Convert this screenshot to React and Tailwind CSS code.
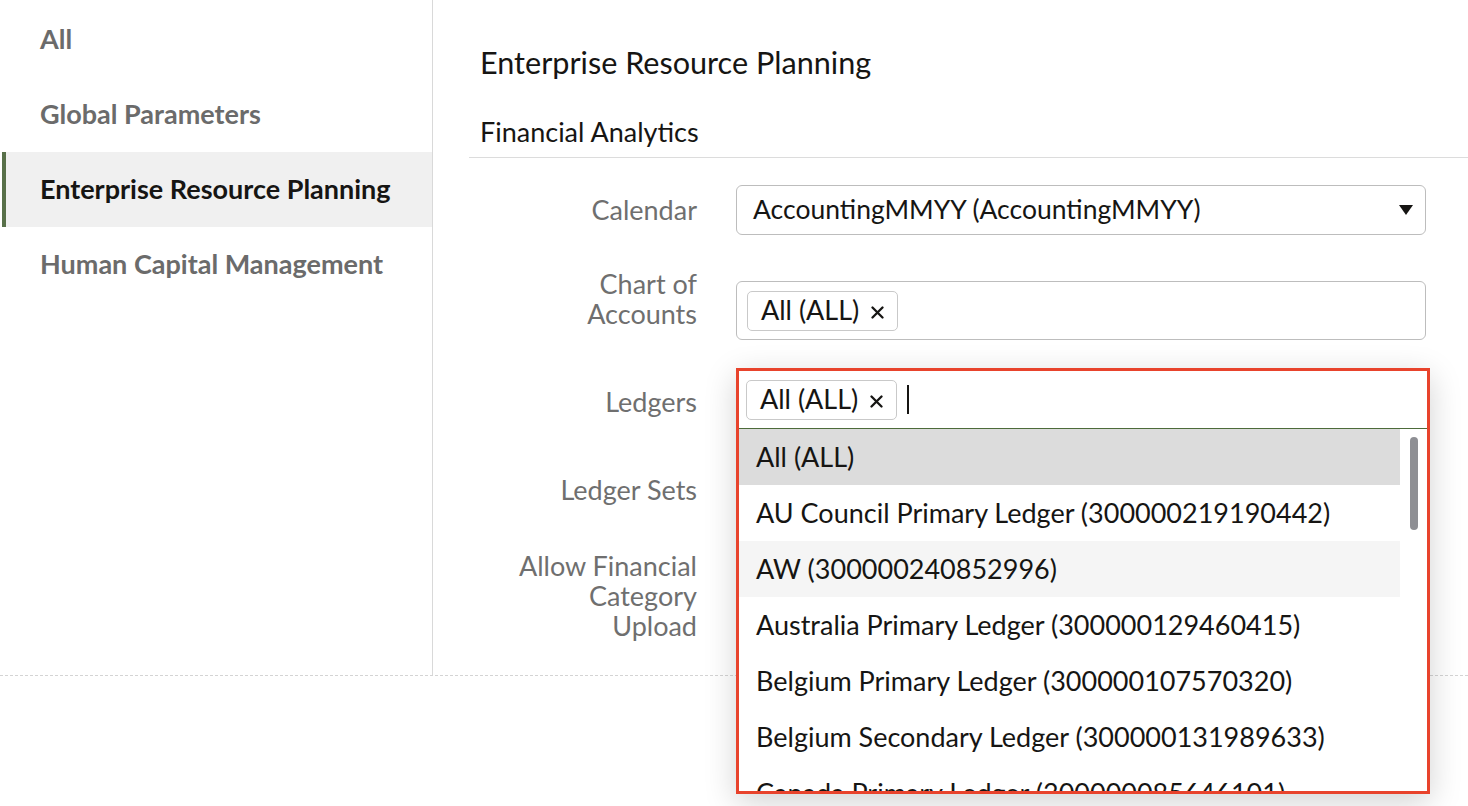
import { ChevronDown } from "lucide-react";

const font = { fontFamily: "Lato, 'Open Sans', sans-serif" };

const navItems = [
  { label: "All" },
  { label: "Global Parameters" },
  { label: "Enterprise Resource Planning", active: true },
  { label: "Human Capital Management" },
];

const ledgerOptions = [
  "All (ALL)",
  "AU Council Primary Ledger (300000219190442)",
  "AW (300000240852996)",
  "Australia Primary Ledger (300000129460415)",
  "Belgium Primary Ledger (300000107570320)",
  "Belgium Secondary Ledger (300000131989633)",
  "Canada Primary Ledger (300000085646101)",
];

function Chip({ label }) {
  return (
    <span className="inline-flex items-center h-[40px] pl-[13px] pr-[13px] gap-[12px] border border-[#c9c9c9] rounded-[5px] bg-white text-[27px] text-[#161513]">
      {label}
      <svg width="13" height="13" viewBox="0 0 13 13" className="mt-[3px]">
        <path d="M1.5 1.5 L11.5 11.5 M11.5 1.5 L1.5 11.5" stroke="#161513" strokeWidth="2.3" strokeLinecap="round" />
      </svg>
    </span>
  );
}

function Label({ children, className = "" }) {
  return (
    <div className={`w-[228px] shrink-0 text-right text-[27px] leading-[30px] text-[#6f6f6f] ${className}`}>
      {children}
    </div>
  );
}

export default function App() {
  return (
    <div className="w-[1468px] h-[806px] bg-white overflow-hidden flex flex-col" style={font}>
      <div className="h-[676px] flex border-b border-dashed border-[#d4d4d4]">
        <aside className="w-[433px] shrink-0 border-r border-[#d9d9d9] pt-[2px]">
          {navItems.map((item) => (
            <div
              key={item.label}
              className={`ml-[2px] h-[75px] pl-[34px] flex items-center border-l-4 text-[27px] font-bold ${
                item.active
                  ? "border-[#587049] bg-[#f0f0f0] text-[#161513]"
                  : "border-transparent text-[#6b6b6b]"
              }`}
            >
              {item.label}
            </div>
          ))}
        </aside>

        <main className="flex-1 pl-[36px] pt-[47px]">
          <h1 className="pl-[11px] text-[30.6px] leading-[32px] text-[#161513]">
            Enterprise Resource Planning
          </h1>
          <h2 className="mt-[38px] pl-[11px] pb-[10px] text-[27px] leading-[30px] text-[#161513] border-b border-[#dcdcdc]">
            Financial Analytics
          </h2>

          <div className="mt-[27px] flex flex-col">
            {/* Calendar */}
            <div className="flex items-center h-[50px]">
              <Label>Calendar</Label>
              <div className="ml-[39px] w-[690px] h-[50px] border border-[#bdbdbd] rounded-[6px] flex items-center justify-between pl-[16px] pr-[12px] text-[26.5px] text-[#161513]">
                AccountingMMYY (AccountingMMYY)
                <svg width="14" height="10" viewBox="0 0 14 10">
                  <path d="M0 0 H14 L7 10 Z" fill="#161513" />
                </svg>
              </div>
            </div>

            {/* Chart of Accounts */}
            <div className="flex items-start mt-[34px]">
              <Label>
                Chart of
                <br />
                Accounts
              </Label>
              <div className="ml-[39px] mt-[12px] w-[690px] h-[59px] border border-[#bdbdbd] rounded-[6px] flex items-center pl-[10px]">
                <Chip label="All (ALL)" />
              </div>
            </div>

            {/* Ledgers */}
            <div className="flex items-start mt-[31px] h-[59px]">
              <Label className="mt-[16px]">Ledgers</Label>
              <div className="ml-[39px] w-[690px] relative">
                <div className="absolute left-0 top-[-3px] w-[694px] h-[426px] border-[3px] border-[#e8432c] bg-white shadow-[0_8px_30px_rgba(0,0,0,0.18)] flex flex-col z-10">
                  <div className="h-[58px] shrink-0 border-b border-[#4d6b3a] flex items-center pl-[7px] gap-[10px]">
                    <Chip label="All (ALL)" />
                    <span className="w-[2px] h-[29px] bg-[#161513]" />
                  </div>
                  <div className="flex-1 flex overflow-hidden">
                    <ul className="flex-1">
                      {ledgerOptions.map((opt, i) => (
                        <li
                          key={opt}
                          className={`h-[56px] flex items-center pl-[17px] text-[27px] text-[#161513] ${
                            i === 0 ? "bg-[#dcdcdc]" : i === 2 ? "bg-[#f5f5f5]" : ""
                          }`}
                        >
                          {opt}
                        </li>
                      ))}
                    </ul>
                    <div className="w-[27px] shrink-0 pt-[8px] flex justify-center">
                      <div className="w-[8px] h-[93px] rounded-full bg-[#8e8f94]" />
                    </div>
                  </div>
                </div>
              </div>
            </div>

            {/* Ledger Sets */}
            <div className="flex items-start mt-[31px] h-[59px]">
              <Label className="mt-[14px]">Ledger Sets</Label>
              <div className="ml-[39px] w-[690px] h-[59px] border border-[#bdbdbd] rounded-[6px] flex items-center justify-end pr-[12px]">
                <ChevronDown size={18} />
              </div>
            </div>

            {/* Allow Financial Category Upload */}
            <div className="flex items-start mt-[31px]">
              <Label>
                Allow Financial
                <br />
                Category
                <br />
                Upload
              </Label>
            </div>
          </div>
        </main>
      </div>
      <div className="flex-1" />
    </div>
  );
}
